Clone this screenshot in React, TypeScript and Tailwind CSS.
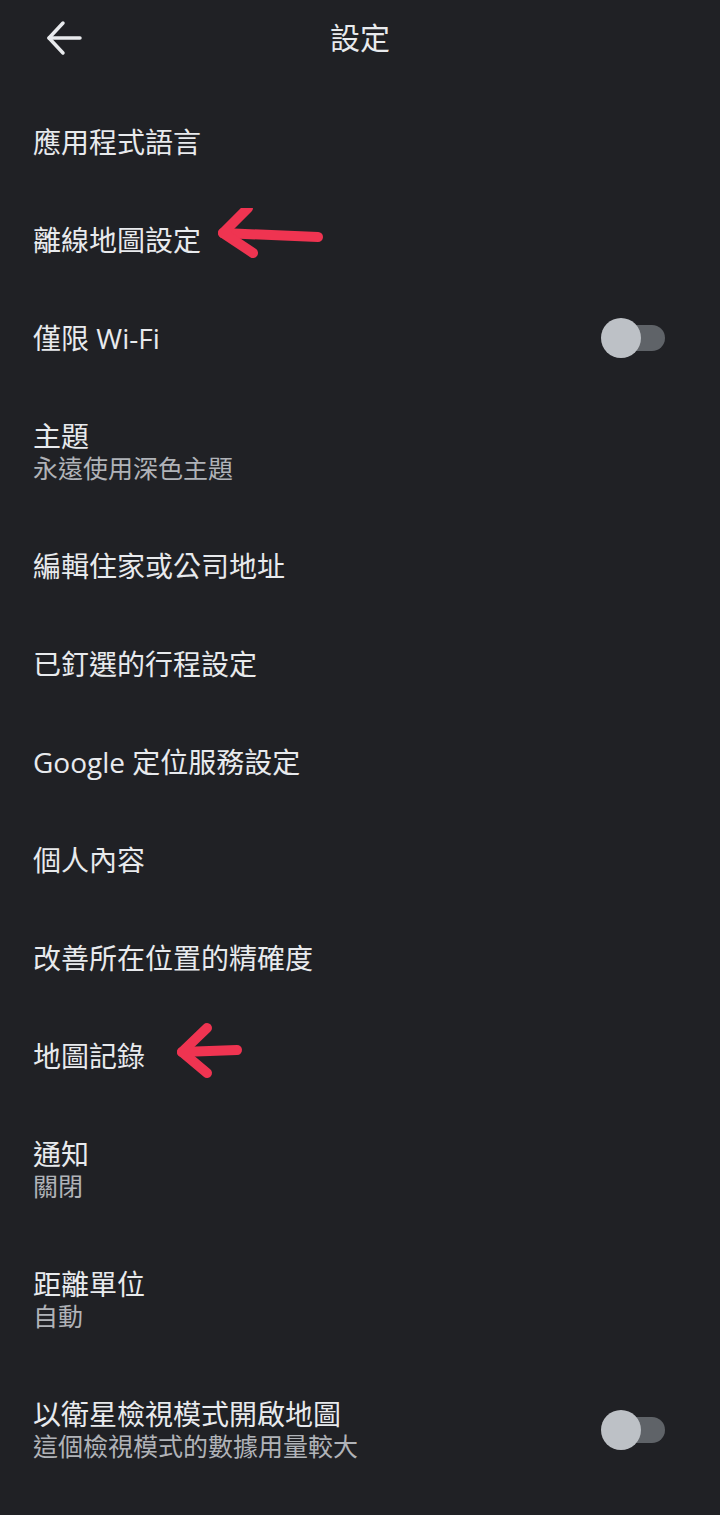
import React from 'react';

type Item = {
  title: string;
  subtitle?: string;
  toggle?: boolean;
  arrow?: 'offline' | 'history';
};

const items: Item[] = [
  { title: '應用程式語言' },
  { title: '離線地圖設定', arrow: 'offline' },
  { title: '僅限 Wi-Fi', toggle: true },
  { title: '主題', subtitle: '永遠使用深色主題' },
  { title: '編輯住家或公司地址' },
  { title: '已釘選的行程設定' },
  { title: 'Google 定位服務設定' },
  { title: '個人內容' },
  { title: '改善所在位置的精確度' },
  { title: '地圖記錄', arrow: 'history' },
  { title: '通知', subtitle: '關閉' },
  { title: '距離單位', subtitle: '自動' },
  { title: '以衛星檢視模式開啟地圖', subtitle: '這個檢視模式的數據用量較大', toggle: true },
];

function Toggle() {
  return (
    <div className="relative w-[64px] h-[40px] flex items-center">
      <div className="absolute right-0 w-[48px] h-[26px] rounded-full bg-[#5f6368]" />
      <div className="absolute left-0 w-[40px] h-[40px] rounded-full bg-[#bdc1c6]" />
    </div>
  );
}

// red annotation arrows drawn over the list
function RedArrow({ kind }: { kind: 'offline' | 'history' }) {
  if (kind === 'offline') {
    return (
      <svg className="absolute left-[175px] top-[-16px]" width="126" height="70" viewBox="0 0 126 70">
        <g stroke="#ef3451" strokeWidth="10" strokeLinecap="round" strokeLinejoin="round" fill="none">
          <path d="M15 25 L110 29" />
          <path d="M40 0 L15 25 L45 45" />
        </g>
      </svg>
    );
  }
  return (
    <svg className="absolute left-[137px] top-[-24px]" width="80" height="70" viewBox="0 0 80 70">
      <g stroke="#ef3451" strokeWidth="10" strokeLinecap="round" strokeLinejoin="round" fill="none">
        <path d="M12 36 L67 34" />
        <path d="M37 12 L12 36 L37 57" />
      </g>
    </svg>
  );
}

export default function App() {
  return (
    <div
      className="w-[720px] min-h-[1515px] bg-[#202125] text-[#e8eaed]"
      style={{ fontFamily: '"Open Sans", "Noto Sans CJK TC", sans-serif' }}
    >
      <div className="relative h-[76px] flex items-center justify-center">
        <svg className="absolute left-[44px] top-[20px]" width="40" height="36" viewBox="0 0 40 36">
          <g stroke="#e8eaed" strokeWidth="3.5" strokeLinecap="round" strokeLinejoin="round" fill="none">
            <path d="M5 18 L36 18" />
            <path d="M19 3 L5 18 L19 33" />
          </g>
        </svg>
        <span className="text-[30px] leading-none">設定</span>
      </div>
      <div className="pt-[17px]">
        {items.map((item) => (
          <div
            key={item.title}
            className={`flex items-center justify-between pl-[33px] pr-[55px] ${item.subtitle ? 'h-[130px]' : 'h-[98px]'}`}
          >
            <div className="relative flex flex-col">
              <span className="text-[28px] leading-[32px]">{item.title}</span>
              {item.subtitle && (
                <span className="text-[25px] leading-[32px] text-[#b0b3b8]">{item.subtitle}</span>
              )}
              {item.arrow && <RedArrow kind={item.arrow} />}
            </div>
            {item.toggle && <Toggle />}
          </div>
        ))}
      </div>
    </div>
  );
}
